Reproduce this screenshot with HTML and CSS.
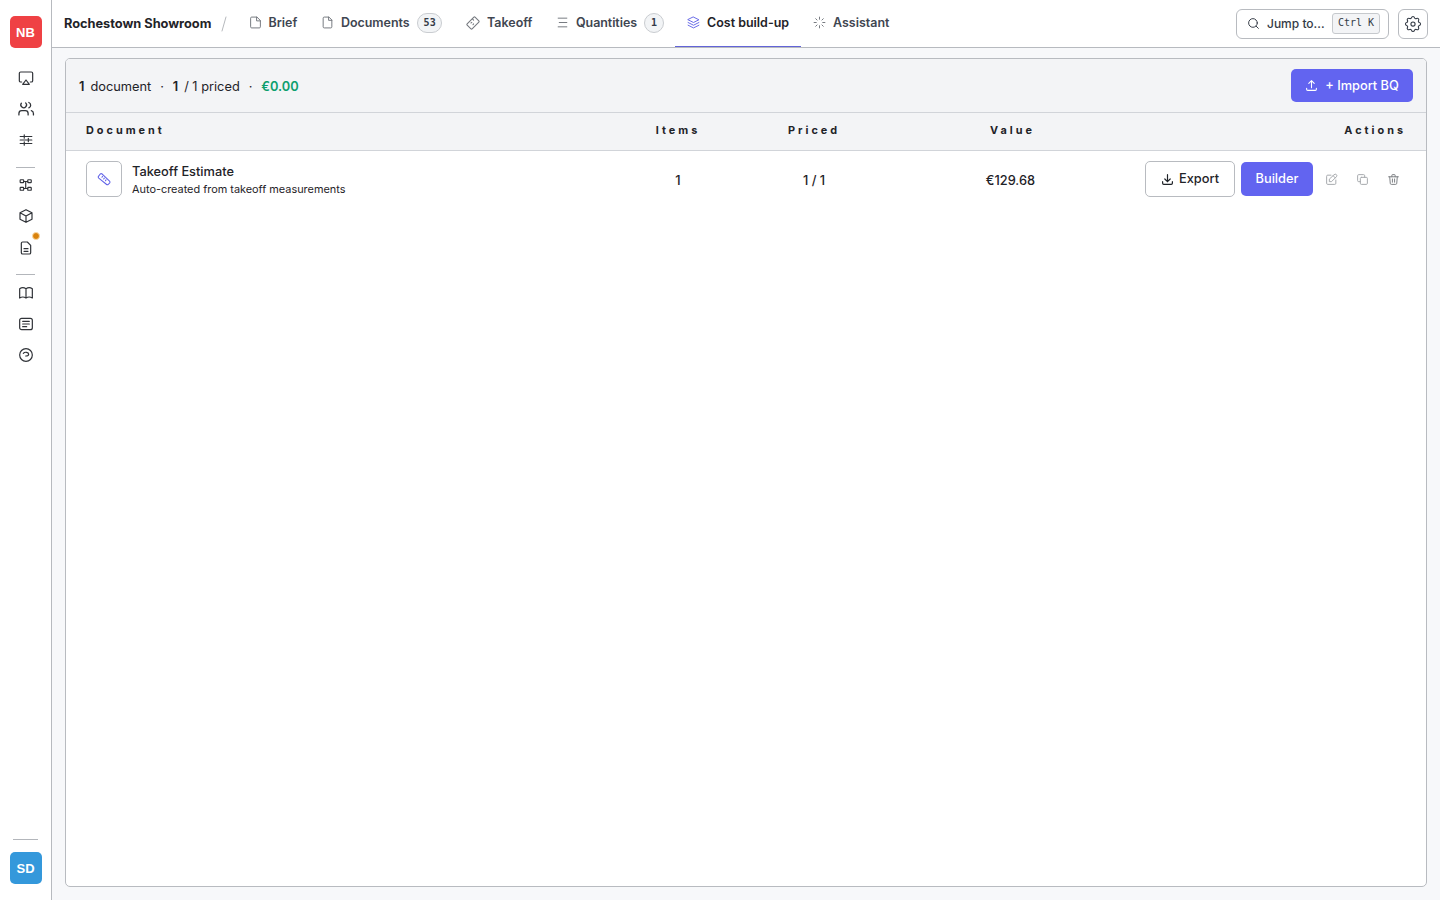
FILE: index.html
```html
<!DOCTYPE html>
<html lang="en">
<head>
<meta charset="utf-8">
<title>Rochestown Showroom</title>
<link rel="stylesheet" href="styles.css">
</head>
<body>
<div class="app">
  <aside class="rail">
    <div class="avatar org">NB</div>
    <nav class="rail-nav">
      <a class="rail-item"><svg viewBox="0 0 24 24"><path d="M5.500 18H4a2 2 0 0 1-2-2V5a2 2 0 0 1 2-2h16a2 2 0 0 1 2 2v11a2 2 0 0 1-2 2h-1.500M12 15l5 6.500H7z"/></svg></a>
      <a class="rail-item people"><svg viewBox="0 0 24 24"><path d="M5.500 4.500A4 4 0 1 0 11.500 4M2 21v-2a4 4 0 0 1 4-4h5a4 4 0 0 1 4 4v2M16 3.500a4 4 0 0 1 0 7.500M22.500 21v-2a4 4 0 0 0-3-3.850"/></svg></a>
      <a class="rail-item sliders"><svg viewBox="0 0 24 24"><path d="M2 6h20M2 12h20M2 18h20M9 3v6M16 9v6M9 15v6"/></svg></a>
      <hr class="rail-line">
      <a class="rail-item nodes"><svg viewBox="0 0 24 24"><rect x="2" y="3" width="6" height="5" rx="1"/><rect x="15" y="3" width="6" height="5" rx="1"/><rect x="2" y="16" width="6" height="5" rx="1"/><rect x="15" y="16" width="6" height="5" rx="1"/><path d="M8 6h7M8 18h7M11.500 6v12"/></svg></a>
      <a class="rail-item"><svg viewBox="0 0 24 24"><path d="M12 2.500l9 4.700v9.600l-9 4.700-9-4.700V7.200zM3 7.200l9 4.800 9-4.800M12 12v9.500"/></svg></a>
      <a class="rail-item doc"><svg viewBox="0 0 24 24"><path d="M14 3H7a2 2 0 0 0-2 2v14a2 2 0 0 0 2 2h10a2 2 0 0 0 2-2V8zM9 13h6M9 17h6"/></svg><i class="dot"></i></a>
      <hr class="rail-line second">
      <a class="rail-item"><svg viewBox="0 0 24 24"><path d="M12 5.500v14a9 9 0 0 0-9.500 0v-14a9 9 0 0 1 9.500 0 9 9 0 0 1 9.500 0v14a9 9 0 0 0-9.500 0"/></svg></a>
      <a class="rail-item"><svg viewBox="0 0 24 24"><rect x="2.500" y="3.500" width="19" height="17" rx="3"/><path d="M7 8h10M7 12h10M7 16h6"/></svg></a>
      <a class="rail-item"><svg viewBox="0 0 24 24"><circle cx="12" cy="12" r="9.500"/><path d="M8 9.500c2-2.500 8-2 8 1.200 0 2.300-2 2.800-4.500 2.800"/></svg></a>
    </nav>
    <hr class="rail-line bottom">
    <div class="avatar user">SD</div>
  </aside>

  <div class="main">
    <header class="topbar">
      <strong class="project">Rochestown Showroom</strong>
      <svg class="slash" viewBox="0 0 6 16"><path d="M5 1L1 15"/></svg>
      <nav class="tabs">
        <a class="tab brief"><svg viewBox="0 0 24 24"><path d="M14 2H5a2 2 0 0 0-2 2v16a2 2 0 0 0 2 2h14a2 2 0 0 0 2-2V9zM14 2v7h7"/></svg><span>Brief</span></a>
        <a class="tab documents"><svg viewBox="0 0 24 24"><path d="M14 2H6a2 2 0 0 0-2 2v16a2 2 0 0 0 2 2h12a2 2 0 0 0 2-2V8zM14 2v6h6"/></svg><span>Documents</span><b class="count">53</b></a>
        <a class="tab takeoff"><svg viewBox="0 0 24 24"><path d="M2 13.500L13.500 2q1-1 2 0L22 8.500q1 1 0 2L10.500 22q-1 1-2 0L2 15.500q-1-1 0-2zM11 5l2 2M8.500 12l1.500-1M12 15l1-1.500"/></svg><span>Takeoff</span></a>
        <a class="tab quantities"><svg viewBox="0 0 24 24"><path d="M4 4h16M6 12h14M4 20h16"/></svg><span>Quantities</span><b class="count">1</b></a>
        <a class="tab cost active"><svg viewBox="0 0 24 24"><path d="M12 2l10 5-10 5L2 7zM2 12l10 5 10-5M2 17l10 5 10-5"/></svg><span>Cost build-up</span></a>
        <a class="tab assistant"><svg viewBox="0 0 24 24"><path d="M12 2v4M12 18v4M2 12h4M18 12h4M5 5l2.500 2.500M16.500 16.500L19 19M5 19l2.500-2.500M16.500 7.500L19 5"/></svg><span>Assistant</span></a>
      </nav>
      <div class="tools">
        <button class="jump"><svg viewBox="0 0 24 24"><circle cx="11" cy="11" r="8"/><path d="M17 17l4 4"/></svg><span>Jump to...</span><kbd>Ctrl K</kbd></button>
        <button class="gear"><svg viewBox="0 0 24 24"><path d="M10.300 4.300c.4-1.800 3-1.800 3.400 0a1.700 1.700 0 0 0 2.600 1.100c1.500-1 3.300.8 2.400 2.400a1.700 1.700 0 0 0 1 2.500c1.800.4 1.800 3 0 3.400a1.700 1.700 0 0 0-1 2.600c.9 1.500-.9 3.300-2.400 2.400a1.700 1.700 0 0 0-2.600 1c-.4 1.800-3 1.800-3.400 0a1.700 1.700 0 0 0-2.600-1c-1.500.9-3.300-.9-2.400-2.400a1.700 1.700 0 0 0-1-2.600c-1.800-.4-1.800-3 0-3.400a1.700 1.700 0 0 0 1-2.600c-.9-1.500.9-3.300 2.400-2.400a1.700 1.700 0 0 0 2.600-1z"/><circle cx="12" cy="12" r="2.500"/></svg></button>
      </div>
    </header>

    <main class="content">
      <section class="panel">
        <div class="summary">
          <p class="stats"><b>1</b><span class="label">document</span><span class="sep">·</span><b>1</b><span class="ratio">/ 1 priced</span><span class="sep">·</span><b class="total">€0.00</b></p>
          <button class="import"><svg viewBox="0 0 24 24"><path d="M3 17v2a2 2 0 0 0 2 2h14a2 2 0 0 0 2-2v-2M7 8l5-5 5 5M12 3v13"/></svg><span>+ Import BQ</span></button>
        </div>
        <div class="grid head">
          <span>Document</span><span class="center">Items</span><span class="center">Priced</span><span class="right">Value</span><span class="right">Actions</span>
        </div>
        <div class="grid row">
          <div class="document">
            <div class="tile"><svg viewBox="0 0 24 24"><path d="M2.500 7.500l3-4q1.500-1.500 3.500 0l12.500 12q1.500 1.700 0 3.500L19.500 21q-1.700 1.500-3.500 0L3 10.500q-1.500-1.500-.5-3zM9.500 7.500L8.500 9M12.500 10.500l-1 1.500M15.500 13.500l-1 1.500"/></svg></div>
            <div class="names"><span class="title">Takeoff Estimate</span><span class="note">Auto-created from takeoff measurements</span></div>
          </div>
          <span class="center num">1</span><span class="center num">1 / 1</span><span class="right num value">€129.68</span>
          <div class="actions">
            <button class="export"><svg viewBox="0 0 24 24"><path d="M3 16v3a2 2 0 0 0 2 2h14a2 2 0 0 0 2-2v-3M7 11l5 5 5-5M12 3v13"/></svg><span>Export</span></button>
            <button class="builder">Builder</button>
            <a class="act"><svg viewBox="0 0 24 24"><path d="M11 4H5a2 2 0 0 0-2 2v13a2 2 0 0 0 2 2h13a2 2 0 0 0 2-2v-6M8 12v4h4l9-9a2.800 2.800 0 0 0-4-4zM15 5l4 4"/></svg></a>
            <a class="act"><svg viewBox="0 0 24 24"><rect x="8" y="8" width="13" height="13" rx="2"/><path d="M16 8V5a2 2 0 0 0-2-2H5a2 2 0 0 0-2 2v9a2 2 0 0 0 2 2h3"/></svg></a>
            <a class="act trash"><svg viewBox="0 0 24 24"><path d="M3 7h18M10 11v6M14 11v6M5 7l1 12a2 2 0 0 0 2 2h8a2 2 0 0 0 2-2l1-12M9 7V4a1 1 0 0 1 1-1h4a1 1 0 0 1 1 1v3"/></svg></a>
          </div>
        </div>
      </section>
    </main>
  </div>
</div>
</body>
</html>
```
FILE: styles.css
```css
* { box-sizing: border-box; }
body { margin: 0; font: 500 12.800px/18px Inter, sans-serif; color: #1f2328; background: #f7f8fa; }
p, hr { margin: 0; border: 0; }
button { font: inherit; padding: 0; margin: 0; color: inherit; }
svg { display: block; flex: none; width: 14px; height: 14px; fill: none; stroke: currentColor; stroke-width: 1.800; stroke-linecap: round; stroke-linejoin: round; }
.app { display: flex; width: 1440px; height: 900px; overflow: hidden; }

.rail { width: 52px; flex: none; display: flex; flex-direction: column; align-items: center; padding: 16px 0; background: #fff; border-right: 1px solid #b7babf; }
.avatar { width: 32px; height: 32px; flex: none; border-radius: 5px; color: #fff; font: 700 13px/33px "Liberation Sans", sans-serif; text-align: center; }
.org { background: #ef4144; }
.user { background: #3498db; margin-top: 12px; }
.rail-nav { display: flex; flex-direction: column; align-items: center; padding-top: 14px; color: #303338; }
.rail-item { position: relative; width: 32px; height: 31px; display: grid; place-items: center; }
.rail-item svg { width: 16px; height: 16px; }
.people svg { width: 18px; height: 17px; }
.rail-item.sliders { height: 32px; }
.rail-item.sliders svg, .rail-item.nodes svg { width: 14px; height: 14px; }
.rail-item.sliders svg { stroke-width: 2; }
.rail-item.nodes svg { stroke-width: 2; }
.rail-item.doc { height: 34px; }
.dot { position: absolute; top: 1px; right: 2px; width: 8px; height: 8px; border-radius: 50%; background: #d9820c; border: 1px solid #fbd9a5; }
.rail-line { width: 19px; height: 1px; margin: 11px 0 1px; background: #b3b6bb; }
.rail-line.second { margin: 9px 0 2px; }
.rail-line.bottom { width: 25px; margin: auto 0 0; }

.main { flex: 1; min-width: 0; display: flex; flex-direction: column; }
.topbar { height: 48px; flex: none; display: flex; align-items: center; padding: 0 12px; background: #fff; border-bottom: 1px solid #b7babf; }
.project { width: 147px; white-space: nowrap; font-weight: 700; letter-spacing: -.02px; }
.slash { width: 6px; height: 16px; margin: 1px 0 0 10px; stroke: #b6b9bd; stroke-width: 1; }
.tabs { display: flex; height: 47px; margin-left: 9.500px; font-size: 12.480px; }
.tab { display: flex; flex: none; align-items: center; padding: 0 12px 2px; white-space: nowrap; color: #3f4651; font-weight: 600; }
.tab svg { margin-right: 7px; color: #74787e; width: 13px; height: 13px; }
.brief { width: 72.500px; }
.documents { width: 145px; letter-spacing: -.03px; }
.takeoff { width: 90px; }
.takeoff svg { width: 14px; height: 14px; }
.quantities { width: 131px; letter-spacing: -.06px; }
.cost { width: 126px; }
.tab.active { color: #1f2328; border-bottom: 1px solid #6264d8; padding-bottom: 1px; }
.tab.active svg { color: #6769e6; }
.count { margin-left: 7px; height: 20px; min-width: 20px; padding: 0 6px; border: 1px solid #c9ccd0; border-radius: 10px; background: #f2f4f6; font: 700 10px/17px "DejaVu Sans Mono", monospace; letter-spacing: 0; text-align: center; color: #343b46; }
.tools { display: flex; gap: 9px; margin-left: auto; }
.jump { width: 153px; height: 30px; display: flex; align-items: center; padding: 0 8px 0 10px; border: 1px solid #b8bbc0; border-radius: 6px; background: #fff; color: #343b46; white-space: nowrap; font-size: 12px; }
.jump svg { width: 13px; height: 13px; margin-right: 7px; }
kbd { margin: 0 0 1px auto; height: 21px; padding: 0 5px; border: 1px solid #c6c9cd; border-radius: 3px; background: #f3f4f6; font: 400 10px/17px "DejaVu Sans Mono", monospace; }
.gear { width: 30px; height: 30px; display: grid; place-items: center; border: 1px solid #b8bbc0; border-radius: 6px; background: #fff; color: #343b46; }
.gear svg { width: 20px; height: 20px; stroke-width: 1.300; }

.content { flex: 1; display: flex; padding: 10px 13px 13px; }
.panel { flex: 1; overflow: hidden; background: #fff; border: 1px solid #b8bbc0; border-radius: 5px; }
.summary { height: 54px; display: flex; align-items: center; justify-content: space-between; padding: 0 13px; background: #f3f4f6; border-bottom: 1px solid #d1d4d9; }
.stats { display: flex; font-weight: 400; padding-top: 3px; white-space: nowrap; }
.stats b { font-weight: 600; }
.label { margin-left: 6px; }
.sep { width: 21.500px; text-align: center; }
.ratio { margin-left: 6px; }
.total { color: #0d9f6e; }
.import { width: 122px; height: 33px; display: flex; align-items: center; justify-content: center; gap: 7px; border: 0; border-radius: 5px; background: #6264f0; color: #fff; white-space: nowrap; }
.import svg { width: 13px; height: 13px; stroke-width: 2; }
.grid { display: grid; grid-template-columns: 524px 136px 136px 153px 1fr; align-items: center; padding: 0 20px; }
.head { height: 38px; padding-bottom: 3px; background: #f3f4f6; border-bottom: 1px solid #d1d4d9; font-size: 10.880px; font-weight: 700; letter-spacing: 2.990px; }
.center { text-align: center; }
.right { text-align: right; }
.row { height: 56px; }
.num { padding-top: 3px; }
.document { display: flex; align-items: center; gap: 10px; white-space: nowrap; }
.tile { width: 36px; height: 36px; display: grid; place-items: center; border: 1px solid #b8bbc0; border-radius: 5px; color: #6264e8; }
.tile svg { width: 14px; height: 14px; }
.names { display: flex; flex-direction: column; padding-top: 2px; }
.note { font-size: 10.900px; line-height: 17px; font-weight: 400; }
.actions { display: flex; align-items: center; justify-content: flex-end; }
.export { width: 90px; height: 36px; display: flex; align-items: center; justify-content: center; gap: 5px; border: 1px solid #b8bbc0; border-radius: 5px; background: #fff; }
.export svg { width: 13px; height: 13px; stroke-width: 2.200; }
.builder { width: 72px; height: 34px; margin: 0 3px 0 6px; border: 0; border-radius: 5px; background: #6264f0; color: #fff; }
.act { width: 31px; height: 31px; display: grid; place-items: center; color: #a5a8ac; }
.act:last-child { margin-right: -3px; }
.act svg { width: 13px; height: 13px; }
.act.trash { color: #7b7e83; }
```
